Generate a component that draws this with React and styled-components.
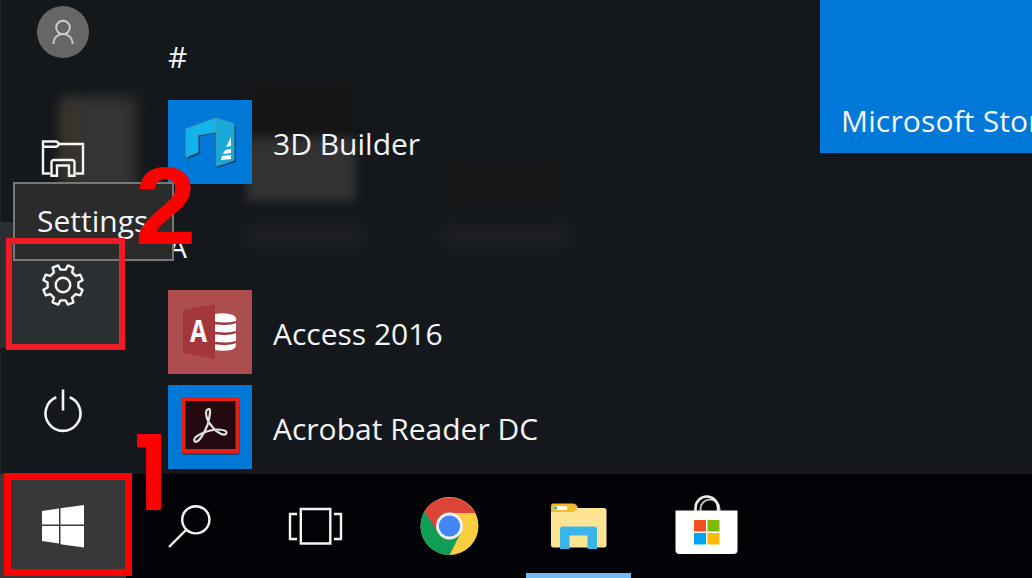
import React from 'react';
import styled, { createGlobalStyle } from 'styled-components';

const Global = createGlobalStyle`
  *{box-sizing:border-box}
  body{margin:0;overflow:hidden;background:#14181c}
`;

const Screen = styled.div`
  position: relative;
  width: 1032px;
  height: 578px;
  overflow: hidden;
  display: flex;
  flex-direction: column;
  background: #14181c;
  color: #f4f5f6;
  font-family: 'Open Sans', 'Noto Sans', sans-serif;
  font-size: 30px;
  line-height: 40px;
  white-space: nowrap;
`;
const Shade = styled.div`
  position: absolute;
  left: ${p => p.$x}px;
  top: ${p => p.$y}px;
  width: ${p => p.$w}px;
  height: ${p => p.$h}px;
  background: ${p => p.$c};
  filter: blur(${p => p.$b || 7}px);
`;
const Menu = styled.main`
  position: relative;
  display: flex;
  height: 474px;
`;
const Rail = styled.nav`
  width: 126px;
  display: flex;
  flex-direction: column;
  box-shadow: inset 2px 0 #1b1f23;
`;
const RailItem = styled.div`
  height: 126px;
  background: ${p => (p.$active ? '#2b2f32' : 'transparent')};
  display: flex;
  align-items: center;
  justify-content: center;
  svg { display: block; }
`;
const Account = styled.div`
  height: 96px;
  padding-top: 6px;
  display: flex;
  justify-content: center;
`;
const Avatar = styled.div`
  width: 52px;
  height: 52px;
  border-radius: 50%;
  background: #666;
  display: grid;
  place-items: center;
`;
const Apps = styled.section`
  width: 694px;
  padding: 37px 0 0 42px;
  display: flex;
  flex-direction: column;
`;
const Heading = styled.div`
  height: 63px;
`;
const AppRow = styled.div`
  display: flex;
  align-items: center;
  gap: 21px;
  height: 84px;
  margin-bottom: ${p => p.$gap || 0}px;
`;
const AppName = styled.span`
  padding-top: 3px;
`;
const IconTile = styled.div`
  width: 84px;
  height: 84px;
  background: ${p => p.$bg};
  svg { display: block; }
`;
const StoreTile = styled.div`
  flex: 1;
  height: 153px;
  background: #0078d7;
  padding: 101px 0 0 21px;
  letter-spacing: 0.15px;
  overflow: hidden;
`;
const Taskbar = styled.footer`
  position: relative;
  height: 104px;
  background: #000206;
  display: flex;
`;
const TaskButton = styled.div`
  width: ${p => p.$w}px;
  background: ${p => (p.$start ? '#38383a' : 'transparent')};
  border-bottom: 5px solid ${p => (p.$open ? '#76b9ed' : 'transparent')};
  background-clip: ${p => (p.$start ? 'border-box' : 'padding-box')};
  margin-right: ${p => p.$gap || 0}px;
  svg { display: block; }
`;
const Tooltip = styled.div`
  position: absolute;
  left: 13px;
  top: 182px;
  width: 161px;
  height: 79px;
  border: 2px solid #777;
  background: #2b2b2b;
  padding: 17px 0 0 22px;
`;
const Outline = styled.div`
  position: absolute;
  left: ${p => p.$x}px;
  top: ${p => p.$y}px;
  width: ${p => p.$w}px;
  height: ${p => p.$h}px;
  border: ${p => p.$t}px solid ${p => p.$c};
`;
const StepTwo = styled.div`
  position: absolute;
  left: 135px;
  top: 152px;
  font: bold 110px/108px 'Liberation Sans', sans-serif;
  color: #f00;
`;
const StepOne = styled.div`
  position: absolute;
  left: 137px;
  top: 434px;
  width: 24px;
  height: 76px;
  font: bold 108px/80px Roboto, sans-serif;
  text-indent: -18px;
  color: #f00;
  clip-path: polygon(0 0, 100% 0, 100% 100%, 9px 100%, 9px 13px, 0 13px);
  &::before {
    content: '';
    position: absolute;
    inset: 0 0 auto 0;
    height: 13px;
    background: #f00;
  }
`;

const line = { fill: 'none', stroke: '#f4f4f4', strokeWidth: 2.4 };

const gearPath = (() => {
  const pts = [];
  for (let i = 0; i < 8; i++) {
    const a = i * 45 - 90 + 22.5;
    [[-13, 15.6], [-8.5, 20.2], [8.5, 20.2], [13, 15.6]].forEach(([d, r]) => {
      const t = ((a + d) * Math.PI) / 180;
      pts.push(`${(22 + r * Math.cos(t)).toFixed(2)} ${(22 + r * Math.sin(t)).toFixed(2)}`);
    });
  }
  return `M${pts.join('L')}Z`;
})();

const UserIcon = () => (
  <svg width="52" height="52" fill="none" stroke="#ccc" strokeWidth="2">
    <circle cx="26" cy="21.500" r="6.800" />
    <path d="M16.500 38v-1a9.500 9 0 0 1 19 0v1" />
  </svg>
);
const ExplorerLine = () => (
  <svg width="44" height="40" viewBox="0 0 44 40" {...line}>
    <path d="M9 34.500H2V2.500h13.500l3 2.500h23.500v29.500H35" />
    <path d="M2 7.800h13.500l3-2.800" />
    <path d="M10.500 36.800V23.500q0-2.500 2.500-2.500h18q2.500 0 2.500 2.500v13.300h-5.500V26.500H16v10.300z" />
  </svg>
);
const GearIcon = () => (
  <svg width="44" height="44" {...line} strokeLinejoin="round">
    <path d={gearPath} />
    <circle cx="22" cy="22" r="7.300" />
  </svg>
);
const PowerIcon = () => (
  <svg width="44" height="46" {...line} strokeWidth="2.600">
    <path d="M15.300 9.200a17.500 17.500 0 1 0 13.400 0M22 1.500v21" />
  </svg>
);
const BuilderIcon = () => (
  <svg width="84" height="84">
    <path d="M20 59V31l28-11 20 6v36l-19 6V33l-17 3v18z" fill="#063d61" opacity=".75" />
    <path d="M18 57V29l30-11v14l-18 3v17z" fill="#12b4ee" stroke="#4b9eae" />
    <path d="M48 18l18 6v36l-17 6z" fill="#18a9d8" stroke="#4b9eae" />
    <path d="M63 37v9l-5 1zM57 50l6-1v4l-8 1zM54 56l9-1v4l-10 1z" fill="#fff" />
  </svg>
);
const AccessIcon = () => (
  <svg width="84" height="84">
    <path d="M15 20l32-6v55l-32-6z" fill="#a4373a" />
    <path d="M47 24q10-2 18 1 4 2 3 6v24q0 5-9 5.500-6 .5-12-.5z" fill="#fff" />
    <path d="M47 33q13 2 21-1M47 43q13 2 21-1M47 53q13 2 21-1" fill="none" stroke="#a4373a" strokeWidth="2.400" />
    <text x="22" y="52" fill="#fff" fontFamily="Open Sans, sans-serif" fontWeight="700" fontSize="31" textLength="17" lengthAdjust="spacingAndGlyphs">A</text>
  </svg>
);
const AcrobatIcon = () => (
  <svg width="84" height="84">
    <rect x="14" y="15" width="58" height="55" rx="2" fill="#123a66" opacity=".6" />
    <rect x="15.500" y="14" width="54" height="52" fill="#240a10" stroke="#e8200f" strokeWidth="4" />
    <path d="M40.500 24c-5 1-2 12 4 18 4 6 13 10 14 6 1-4-11-4-18-2-8 2-16 7-14 10 3 4 10-8 13-16 2-7 4-17 1-16z" fill="none" stroke="#ddd" strokeWidth="2.200" />
  </svg>
);
const WindowsIcon = () => (
  <svg width="126" height="99" fill="#fff">
    <path d="M42 37l17-2.500V50.500H42zM60.500 34.200L84 31v19.500H60.500zM42 52h17v17.500L42 67zM60.500 52H84v21.500l-23.500-3.300z" />
  </svg>
);
const SearchIcon = () => (
  <svg width="126" height="99" {...line}>
    <circle cx="69.800" cy="45.800" r="13.600" />
    <path d="M60.500 55.500L43 73" />
  </svg>
);
const TaskViewIcon = () => (
  <svg width="126" height="99" {...line}>
    <path d="M48.800 35h29.500v34.500H48.800zM45 40h-7v25h7M82 40h7v25h-7" />
  </svg>
);
const ChromeIcon = () => (
  <svg width="126" height="99" viewBox="8 0 126 99">
    <circle cx="79.500" cy="52" r="29" fill="#ffcd40" />
    <path d="M54.400 37.500A29 29 0 0 1 105 39H79.500L67.500 59z" fill="#db4437" />
    <path d="M54.400 37.500A29 29 0 0 0 79.500 81L91 58.500 68 58.500z" fill="#0f9d58" />
    <circle cx="79.500" cy="52" r="13.400" fill="#f1f1f1" />
    <circle cx="79.500" cy="52" r="10.600" fill="#4285f4" />
  </svg>
);
const FolderIcon = () => (
  <svg width="105" height="99">
    <path d="M25 32q0-2.500 2-2.500h20q3 0 5 4l-4 6H25z" fill="#f5b92c" />
    <path d="M25 38h21q3 0 5-4h27q2.500 0 2.500 2.500V71q0 2.500-2.500 2.500H27.500Q25 73.500 25 71z" fill="#ffe593" />
    <rect x="27.500" y="32.300" width="14" height="3.600" rx="1.800" fill="#fff" />
    <circle cx="29.500" cy="34.100" r="1.500" fill="#2ba39a" />
    <path d="M34 75V55q0-2.500 2.500-2.500h32q2.500 0 2.500 2.500v20h-9.500V61.500h-18V75z" fill="#3ab5ea" />
  </svg>
);
const StoreIcon = () => (
  <svg width="126" height="99" fill="none">
    <path d="M29.500 38v-3a9.500 9.500 0 0 1 19 0v3" stroke="#bbb" strokeWidth="2" />
    <path d="M24.500 38v-4a11.300 11.500 0 0 1 22.600 0v4" stroke="#eee" strokeWidth="2.600" />
    <path d="M4.500 36.500h62v39.500q0 4-4 4h-54q-4 0-4-4z" fill="#fff" />
    <path d="M23 46h12v11.500H23z" fill="#f25022" />
    <path d="M36.500 46h12v11.500h-12z" fill="#7fba00" />
    <path d="M23 59h12v11.500H23z" fill="#00a4ef" />
    <path d="M36.500 59h12v11.500h-12z" fill="#ffb900" />
  </svg>
);

export default function App() {
  return (
    <Screen>
      <Global />
      <Shade $x={62} $y={97} $w={74} $h={94} $c="#353433" />
      <Shade $x={62} $y={100} $w={12} $h={80} $c="#3a3528" $b={6} />
      <Shade $x={250} $y={82} $w={106} $h={55} $c="#151515" />
      <Shade $x={247} $y={138} $w={109} $h={63} $c="#323232" $b={5} />
      <Shade $x={245} $y={224} $w={120} $h={24} $c="#1d1f21" />
      <Shade $x={450} $y={163} $w={110} $h={38} $c="#161616" />
      <Shade $x={440} $y={224} $w={130} $h={24} $c="#1d1f21" />
      <Menu>
        <Rail>
          <Account><Avatar><UserIcon /></Avatar></Account>
          <RailItem><ExplorerLine /></RailItem>
          <RailItem $active><GearIcon /></RailItem>
          <RailItem><PowerIcon /></RailItem>
        </Rail>
        <Apps>
          <Heading>#</Heading>
          <AppRow $gap={43}><IconTile $bg="#0078d7"><BuilderIcon /></IconTile><AppName>3D Builder</AppName></AppRow>
          <Heading>A</Heading>
          <AppRow $gap={11}><IconTile $bg="#ae4d50"><AccessIcon /></IconTile><AppName>Access 2016</AppName></AppRow>
          <AppRow><IconTile $bg="#0078d7"><AcrobatIcon /></IconTile><AppName>Acrobat Reader DC</AppName></AppRow>
        </Apps>
        <StoreTile>Microsoft Store</StoreTile>
      </Menu>
      <Taskbar>
        <TaskButton $w={126} $start><WindowsIcon /></TaskButton>
        <TaskButton $w={126}><SearchIcon /></TaskButton>
        <TaskButton $w={126}><TaskViewIcon /></TaskButton>
        <TaskButton $w={126} $gap={22}><ChromeIcon /></TaskButton>
        <TaskButton $w={105} $open $gap={40}><FolderIcon /></TaskButton>
        <TaskButton $w={126}><StoreIcon /></TaskButton>
      </Taskbar>
      <Tooltip>Settings</Tooltip>
      <Outline $x={6} $y={238} $w={119} $h={112} $t={6} $c="#ee1c25" />
      <Outline $x={4} $y={473} $w={128} $h={103} $t={7} $c="#f00" />
      <StepTwo>2</StepTwo>
      <StepOne>1</StepOne>
    </Screen>
  );
}
